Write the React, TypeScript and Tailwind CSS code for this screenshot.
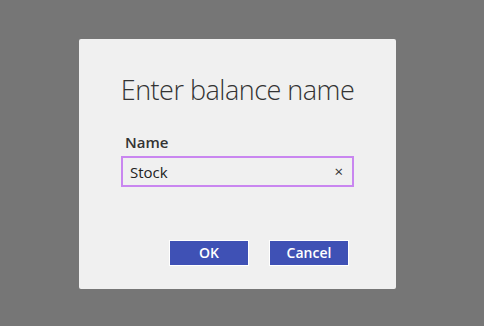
import React from 'react';

export default function App() {
  return (
    <div className="w-[484px] h-[326px] bg-[#767676] pt-[39px] pl-[79px] font-['Open_Sans','Noto_Sans',sans-serif]">
      <div className="w-[317px] h-[250px] bg-[#f0f0f0] rounded-[2px] flex flex-col px-[42px]">
        <h1 className="mt-[33px] -mx-[20px] text-center whitespace-nowrap text-[27px] leading-[36px] font-light text-[#333333] tracking-[-0.5px]">
          Enter balance name
        </h1>
        <label className="mt-[24px] ml-[4px] text-[15px] leading-[20px] font-semibold text-[#333333]">
          Name
        </label>
        <div className="mt-[4px] h-[31px] border-2 border-[#c986f0] flex items-center justify-between pl-[7px] pr-[9px]">
          <span className="text-[15px] text-[#222222] pt-[1px]">Stock</span>
          <span className="text-[15px] text-[#333333] leading-none">×</span>
        </div>
        <div className="mt-[53px] flex justify-end gap-[20px] pr-[5px]">
          <button className="w-[80px] h-[26px] border border-white bg-[#3f51b5] text-white text-[14px] font-semibold leading-none">
            OK
          </button>
          <button className="w-[80px] h-[26px] border border-white bg-[#3f51b5] text-white text-[14px] font-semibold leading-none">
            Cancel
          </button>
        </div>
      </div>
    </div>
  );
}
